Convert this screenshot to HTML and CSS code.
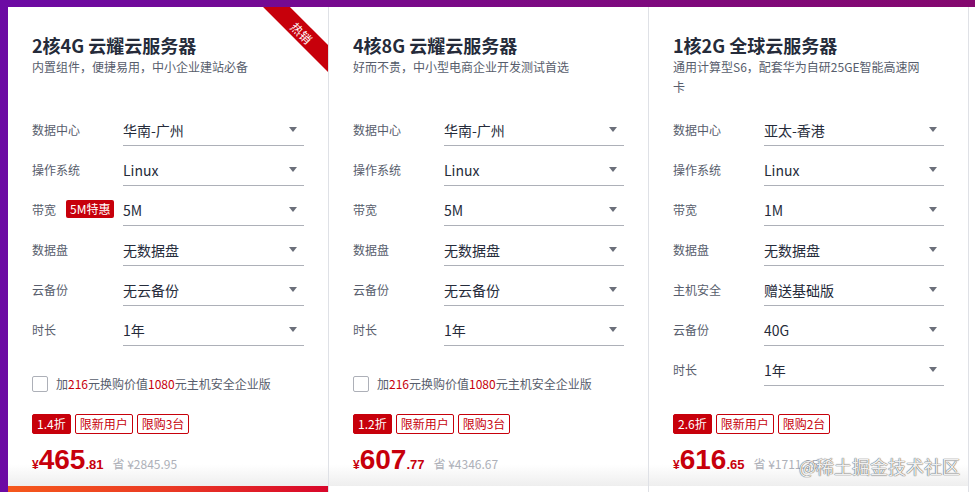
FILE: index.html
```html
<!DOCTYPE html>
<html lang="zh-CN">
<head>
  <meta charset="UTF-8" />
  <meta name="viewport" content="width=device-width, initial-scale=1.0" />
  <title>云服务器</title>
  <link rel="stylesheet" href="styles.css">
</head>
<body>

  <div class="page">

    <!-- Card 1 -->
    <div class="card card-active">
      <div class="ribbon"><span>热销</span></div>
      <div class="card-head">
        <h2>2核4G 云耀云服务器</h2>
        <p>内置组件，便捷易用，中小企业建站必备</p>
      </div>
      <ul class="opts">
        <li><span class="label">数据中心</span><div class="select">华南-广州</div></li>
        <li><span class="label">操作系统</span><div class="select">Linux</div></li>
        <li><span class="label">带宽 <em class="badge">5M特惠</em></span><div class="select">5M</div></li>
        <li><span class="label">数据盘</span><div class="select">无数据盘</div></li>
        <li><span class="label">云备份</span><div class="select">无云备份</div></li>
        <li><span class="label">时长</span><div class="select">1年</div></li>
      </ul>
      <label class="addon"><span class="box"></span>加<b>216</b>元换购价值<b>1080</b>元主机安全企业版</label>
      <div class="buy">
        <div class="tags">
          <span class="tag tag-fill">1.4折</span>
          <span class="tag">限新用户</span>
          <span class="tag">限购3台</span>
        </div>
        <div class="price">
          <span class="yen">¥</span><span class="int">465</span><span class="dec">.81</span>
          <span class="save">省 ¥2845.95</span>
        </div>
      </div>
      <div class="btn"></div>
    </div>

    <!-- Card 2 -->
    <div class="card">
      <div class="card-head">
        <h2>4核8G 云耀云服务器</h2>
        <p>好而不贵，中小型电商企业开发测试首选</p>
      </div>
      <ul class="opts">
        <li><span class="label">数据中心</span><div class="select">华南-广州</div></li>
        <li><span class="label">操作系统</span><div class="select">Linux</div></li>
        <li><span class="label">带宽</span><div class="select">5M</div></li>
        <li><span class="label">数据盘</span><div class="select">无数据盘</div></li>
        <li><span class="label">云备份</span><div class="select">无云备份</div></li>
        <li><span class="label">时长</span><div class="select">1年</div></li>
      </ul>
      <label class="addon"><span class="box"></span>加<b>216</b>元换购价值<b>1080</b>元主机安全企业版</label>
      <div class="buy">
        <div class="tags">
          <span class="tag tag-fill">1.2折</span>
          <span class="tag">限新用户</span>
          <span class="tag">限购3台</span>
        </div>
        <div class="price">
          <span class="yen">¥</span><span class="int">607</span><span class="dec">.77</span>
          <span class="save">省 ¥4346.67</span>
        </div>
      </div>
      <div class="btn"></div>
    </div>

    <!-- Card 3 -->
    <div class="card">
      <div class="card-head">
        <h2>1核2G 全球云服务器</h2>
        <p>通用计算型S6，配套华为自研25GE智能高速网卡</p>
      </div>
      <ul class="opts">
        <li><span class="label">数据中心</span><div class="select">亚太-香港</div></li>
        <li><span class="label">操作系统</span><div class="select">Linux</div></li>
        <li><span class="label">带宽</span><div class="select">1M</div></li>
        <li><span class="label">数据盘</span><div class="select">无数据盘</div></li>
        <li><span class="label">主机安全</span><div class="select">赠送基础版</div></li>
        <li><span class="label">云备份</span><div class="select">40G</div></li>
        <li><span class="label">时长</span><div class="select">1年</div></li>
      </ul>
      <div class="buy">
        <div class="tags">
          <span class="tag tag-fill">2.6折</span>
          <span class="tag">限新用户</span>
          <span class="tag">限购2台</span>
        </div>
        <div class="price">
          <span class="yen">¥</span><span class="int">616</span><span class="dec">.65</span>
          <span class="save">省 ¥1711.35</span>
        </div>
      </div>
      <div class="btn"></div>
    </div>

    <div class="card-more"></div>
  </div>

  <!-- Watermark -->
  <div class="watermark">@稀土掘金技术社区</div>

</body>
</html>
```

FILE: styles.css
```css
html, body {
  height: 100%;
}

body {
  margin: 0;
  overflow: hidden;
  font-family: "Noto Sans CJK SC", "Noto Sans", sans-serif;
  background: linear-gradient(90deg, #6c0aa4 0%, #7a0a88 45%, #84086e 100%);
}

.page {
  display: flex;
  padding: 7px 0 0 8px;
}

.card {
  position: relative;
  display: flex;
  flex-direction: column;
  width: 319px;
  height: 519px;
  background: #fff;
  border-right: 1px solid #dfe1e6;
  overflow: hidden;
}

.card:first-child {
  width: 320px;
}

.card-more {
  flex: 1;
  height: 519px;
  background: #fff;
}

/* ribbon in the corner */
.ribbon {
  position: absolute;
  top: 0;
  right: 0;
  width: 66px;
  height: 66px;
  overflow: hidden;
}

.ribbon span {
  position: absolute;
  left: -15px;
  top: 16px;
  width: 110px;
  height: 19px;
  line-height: 19px;
  background: #c7000b;
  color: #fff;
  font-size: 12px;
  text-align: center;
  transform: rotate(45deg);
}

.card-head {
  height: 81px;
  padding: 26px 24px 0;
}

.card-head h2 {
  margin: 0;
  font-size: 18px;
  line-height: 24px;
  font-weight: 700;
  color: #252b3a;
}

.card-head p {
  margin: 0;
  width: 250px;
  font-size: 12px;
  line-height: 20px;
  color: #575d6c;
}

.opts {
  list-style: none;
  margin: 0;
  padding: 0 24px;
  display: flex;
  flex-direction: column;
  gap: 8px;
}

.opts li {
  display: flex;
  align-items: center;
  height: 32px;
}

.label {
  display: flex;
  align-items: center;
  gap: 10px;
  width: 91px;
  flex-shrink: 0;
  font-size: 12px;
  color: #575d6c;
  margin-top: -2px;
}

.badge {
  font-style: normal;
  background: #c7000b;
  color: #fff;
  font-size: 12px;
  line-height: 18px;
  padding: 0 4px;
  border-radius: 2px;
}

.select {
  flex: 1;
  display: flex;
  align-items: center;
  justify-content: space-between;
  height: 31px;
  border-bottom: 1px solid #adb0b8;
  padding-right: 7px;
  font-size: 14px;
  color: #252b3a;
}

.select::after {
  content: "";
  border-left: 4px solid transparent;
  border-right: 4px solid transparent;
  border-top: 5px solid #6b6f7a;
}

.addon {
  display: flex;
  align-items: center;
  margin: 29px 24px 0;
  font-size: 12px;
  color: #575d6c;
}

.addon .box {
  width: 14px;
  height: 14px;
  border: 1px solid #adb0b8;
  border-radius: 2px;
  margin-right: 8px;
}

.addon b {
  font-weight: 400;
  color: #c7000b;
}

.buy {
  margin-top: auto;
  padding: 0 24px 10px;
  background: linear-gradient(to bottom, #fff 0%, #fff 70%, #eeeeee 100%);
}

.tags {
  display: flex;
  gap: 4px;
}

.tag {
  height: 18px;
  line-height: 18px;
  padding: 0 4px;
  border: 1px solid #c7000b;
  border-radius: 2px;
  font-size: 12px;
  color: #c7000b;
}

.tag-fill {
  background: #c7000b;
  color: #fff;
}

.price {
  display: flex;
  align-items: baseline;
  height: 32px;
  margin-top: 10px;
  font-family: "Liberation Sans", Arial, sans-serif;
  font-weight: 700;
  color: #c7000b;
}

.yen {
  font-size: 12px;
}

.int {
  font-size: 28px;
  line-height: 32px;
}

.dec {
  font-size: 13px;
}

.save {
  margin-left: 9px;
  font-family: "Noto Sans CJK SC", sans-serif;
  font-size: 12px;
  font-weight: 400;
  color: #adb0b8;
}

.btn {
  height: 40px;
  flex-shrink: 0;
  background: #fff;
}

.card-active .btn {
  background: linear-gradient(90deg, #f5581c 0%, #ea3a24 50%, #d8062a 100%);
}

.watermark {
  position: absolute;
  right: 15px;
  bottom: 13px;
  font-size: 18px;
  color: rgba(255, 255, 255, 0.92);
  text-shadow: 0 0 1px #555, 0 0 1px #555;
}
```
